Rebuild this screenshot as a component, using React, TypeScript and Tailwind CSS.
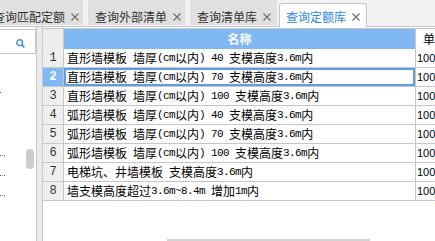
import React from "react";

const rows = [
  "直形墙模板 墙厚(cm以内) 40 支模高度3.6m内",
  "直形墙模板 墙厚(cm以内) 70 支模高度3.6m内",
  "直形墙模板 墙厚(cm以内) 100 支模高度3.6m内",
  "弧形墙模板 墙厚(cm以内) 40 支模高度3.6m内",
  "弧形墙模板 墙厚(cm以内) 70 支模高度3.6m内",
  "弧形墙模板 墙厚(cm以内) 100 支模高度3.6m内",
  "电梯坑、井墙模板 支模高度3.6m内",
  "墙支模高度超过3.6m~8.4m 增加1m内",
];

function Mixed({ text }: { text: string }) {
  const parts = text.match(/[\x00-\x7f]+|[^\x00-\x7f]+/g) || [];
  return (
    <>
      {parts.map((p, i) =>
        /[\x00-\x7f]/.test(p[0]) ? (
          <span key={i} className="font-['Liberation_Mono',monospace] text-[11px] tracking-[-0.6px]">
            {p}
          </span>
        ) : (
          <span key={i}>{p}</span>
        )
      )}
    </>
  );
}

function CloseX() {
  return (
    <svg width="8" height="8" viewBox="0 0 8 8" className="ml-[6px] mt-[4px] shrink-0">
      <path d="M0.5 0.5 L7.5 7.5 M7.5 0.5 L0.5 7.5" stroke="#6e6e6e" strokeWidth="1.2" fill="none" />
    </svg>
  );
}

function Tab({ label, cls }: { label: string; cls: string }) {
  return (
    <div className={"h-[25px] shrink-0 bg-[#e0e0e0] flex items-start pt-[9px] pl-[7px] text-[#333] " + cls}>
      <span className="leading-[16px] whitespace-nowrap">{label}</span>
      <CloseX />
    </div>
  );
}

export default function App() {
  return (
    <div className="w-[435px] h-[241px] overflow-hidden bg-white flex flex-col font-['Noto_Sans_CJK_SC',sans-serif] text-[12px] text-black">
      <div className="h-[27px] shrink-0 bg-[#f2f2f2] border-b border-[#c6c6c6] flex items-start">
        <Tab label="查询匹配定额" cls="ml-[-14px] w-[97px]" />
        <Tab label="查询外部清单" cls="ml-[5px] w-[97px]" />
        <Tab label="查询清单库" cls="ml-[5px] w-[87px]" />
        <div className="relative h-[24px] mt-[3px] ml-[2px] w-[88px] shrink-0 bg-white border border-b-0 border-[#c6c6c6] rounded-t-[3px] flex items-start pt-[5px] pl-[6px] text-[#2b86e6]">
          <span className="leading-[16px] whitespace-nowrap">查询定额库</span>
          <CloseX />
        </div>
      </div>

      <div className="flex flex-1 min-h-0">
        {/* left panel */}
        <div className="w-[36px] shrink-0 flex flex-col pt-[2px]">
          <div className="h-[25px] shrink-0 border-y border-r border-[#c6c6c6] flex items-center justify-end pr-[10px] pt-[3px]">
            <svg width="9" height="9" viewBox="0 0 9 9">
              <circle cx="3.7" cy="3.7" r="2.9" stroke="#3b8fdf" strokeWidth="1.4" fill="none" />
              <path d="M5.8 5.8 L8.4 8.4" stroke="#3b8fdf" strokeWidth="1.8" />
            </svg>
          </div>
          <div className="flex flex-1">
            <div className="flex-1 flex flex-col">
              <div className="mt-[38px] h-[1px] w-[1px] bg-[#2e5fb5]" />
              <div className="mt-[62px] h-[1px] flex gap-[1px]">
                <div className="w-[1px] bg-[#2e5fb5]" />
                <div className="w-[1px] bg-[#d4892a]" />
                <div className="w-[1px] bg-[#2e5fb5]" />
              </div>
              <div className="mt-[19px] h-[1px] flex gap-[1px]">
                <div className="w-[1px] bg-[#2e5fb5]" />
                <div className="w-[1px] bg-[#d4892a]" />
                <div className="w-[1px] bg-[#2e5fb5]" />
              </div>
              <div className="mt-[19px] h-[1px] flex gap-[1px]">
                <div className="w-[1px] bg-[#2e5fb5]" />
                <div className="w-[1px] bg-[#d4892a]" />
                <div className="w-[1px] bg-[#2e5fb5]" />
              </div>
            </div>
            <div className="w-[8px] mr-[2px] flex flex-col">
              <div className="mt-[95px] h-[20px] rounded-[4px] bg-[#cdcdcd]" />
            </div>
          </div>
        </div>

        {/* splitter */}
        <div className="w-[7px] shrink-0 bg-[#ebebeb] border-x border-[#c9c9c9]" />

        {/* table */}
        <div className="flex-1 min-w-0 flex flex-col pt-[1px]">
          <div className="border-t border-[#c6c6c6] flex flex-col">
            <div className="h-[20px] flex shrink-0">
              <div className="w-[21px] shrink-0 bg-[#ececec] border-r border-[#c6c6c6]" />
              <div className="w-[352px] shrink-0 bg-[#80b8f4] border-r border-[#c6c6c6] flex items-center justify-center text-white font-bold leading-none">
                名称
              </div>
              <div className="flex-1 flex items-center pl-[7px] leading-none whitespace-nowrap overflow-hidden">单位</div>
            </div>
            {rows.map((r, i) => {
              const sel = i === 1;
              return (
                <div key={i} className="h-[19px] flex shrink-0 border-b border-[#c6c6c6]">
                  <div
                    className={
                      sel
                        ? "w-[21px] shrink-0 bg-[#80b8f4] border-r border-[#c6c6c6] flex items-center justify-center text-white font-bold font-['Liberation_Mono',monospace] text-[12px]"
                        : "w-[21px] shrink-0 bg-[#efefef] border-r border-[#c6c6c6] flex items-center justify-center text-[#333] font-['Liberation_Mono',monospace] text-[12px]"
                    }
                  >
                    {i + 1}
                  </div>
                  <div
                    className={
                      sel
                        ? "w-[352px] shrink-0 border-r border-[#c6c6c6] flex items-center pl-[3px] whitespace-pre leading-none ring-2 ring-inset ring-[#5c9de4]"
                        : "w-[352px] shrink-0 border-r border-[#c6c6c6] flex items-center pl-[3px] whitespace-pre leading-none"
                    }
                  >
                    <Mixed text={r} />
                  </div>
                  <div className="flex-1 flex items-center pl-[1px] font-['Liberation_Sans',sans-serif] text-[11px] leading-none">100</div>
                </div>
              );
            })}
          </div>
          <div className="flex-1" />
          <div className="h-[2px] shrink-0 flex">
            <div className="ml-[124px] w-[203px] bg-[#d3d3d3]" />
          </div>
        </div>
      </div>
    </div>
  );
}
